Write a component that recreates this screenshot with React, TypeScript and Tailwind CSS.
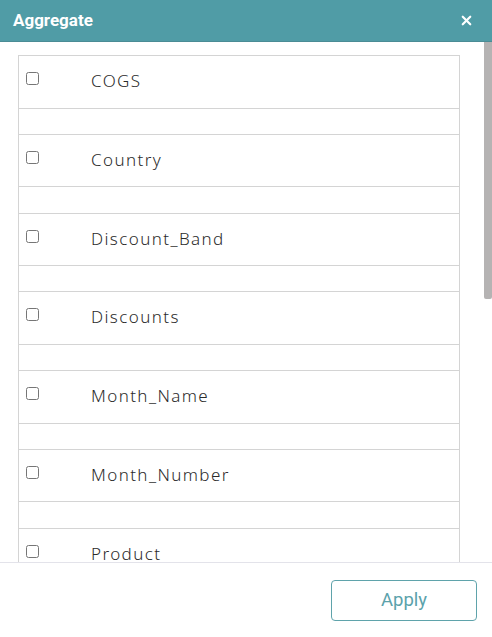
import { X } from 'lucide-react';

const fields = [
	'COGS',
	'Country',
	'Discount_Band',
	'Discounts',
	'Month_Name',
	'Month_Number',
	'Product',
	'Profit',
	'Sale_Price',
	'Sales',
	'Segment',
	'Units_Sold',
	'Year'
];

function FieldRow({ name }: { name: string }) {
	return (
		<div>
			<div className="flex h-[52.5px] items-start border-t border-[#d4d4d4]">
				<input type="checkbox" className="m-0 ml-[7px] mt-[16px] h-[13px] w-[13px]" />
				<span className="ml-[52px] mt-[13px] text-[17px] font-light leading-[24px] tracking-[1.4px] text-[#2b2b2b]">
					{name}
				</span>
			</div>
			<div className="h-[26.25px] border-t border-[#d4d4d4]" />
		</div>
	);
}

export default function App() {
	return (
		<div className="flex h-[637px] w-[492px] flex-col bg-white font-['Noto_Sans',sans-serif]">
			<div className="flex h-[42px] shrink-0 items-center justify-between border-b border-[#4a8c95] bg-[#509ca6] pl-[13px] pr-[18px]">
				<span className="font-['Roboto',sans-serif] text-[17px] font-bold text-white">
					Aggregate
				</span>
				<X className="h-[15px] w-[15px] text-white" strokeWidth={3.5} />
			</div>
			<div className="flex h-[520px] shrink-0">
				<div className="flex-1 overflow-hidden pl-[18px] pr-[24px] pt-[13px]">
					<div className="border-x border-b border-[#d4d4d4]">
						{fields.map((f) => (
							<FieldRow key={f} name={f} />
						))}
					</div>
				</div>
				<div className="w-[8px] shrink-0 bg-white">
					<div className="h-[257px] rounded-b-[2px] bg-[#b5b3b3]" />
				</div>
			</div>
			<div className="flex flex-1 items-start justify-end border-t border-[#e3e3ea] pr-[15px] pt-[17px]">
				<button
					type="button"
					className="h-[41px] w-[146px] rounded-[4px] border border-[#5fa3ab] font-['Roboto',sans-serif] text-[18.5px] text-[#5ba2ab]"
				>
					Apply
				</button>
			</div>
		</div>
	);
}
